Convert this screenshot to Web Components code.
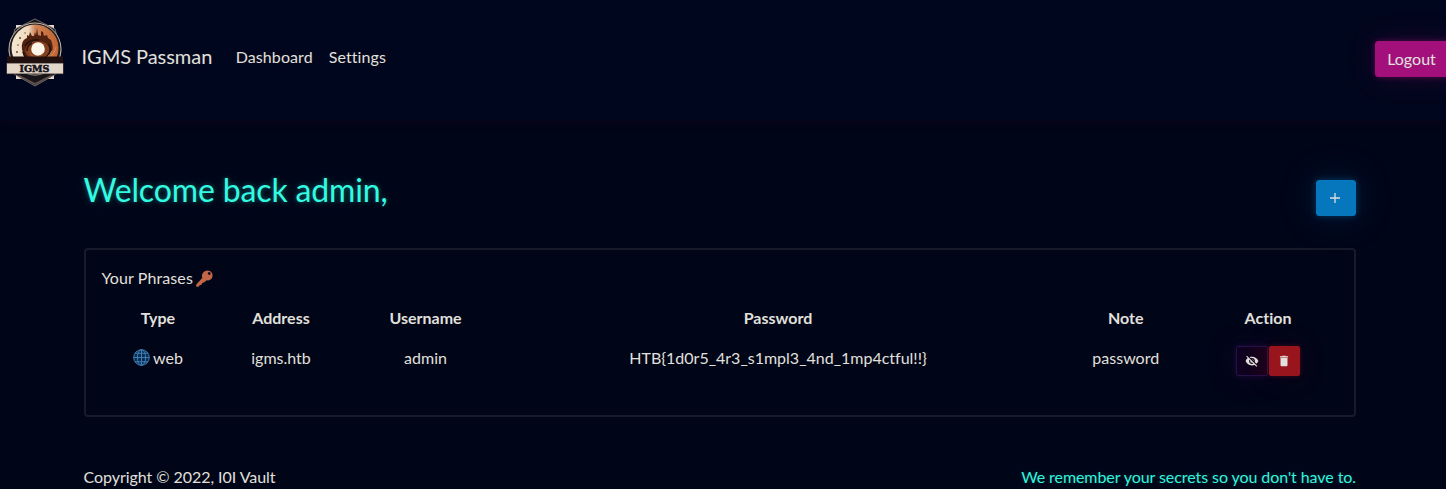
<!DOCTYPE html>
<html lang="en">
<head>
<meta charset="utf-8">
<title>IGMS Passman</title>
<style>
html,body{margin:0;height:489px;overflow:hidden;background:#000518}
body{font:16px/24px Lato,sans-serif;color:#e2e0dd;font-variant-ligatures:none}
</style>
</head>
<body>
<pass-app></pass-app>
<script>
const define = (name, html) => customElements.define(name, class extends HTMLElement {
  constructor() {
    super();
    this.attachShadow({ mode: 'open' }).innerHTML = html;
  }
});

define('igms-logo', `
<style>:host{display:block;width:60px;height:70px}svg{display:block}</style>
<svg width="60" height="70" viewBox="0 0 60 70">
<defs><linearGradient id="o" x1="0" x2="1"><stop offset="0" stop-color="#f6e8d4"/><stop offset=".36" stop-color="#eed9c0"/><stop offset=".5" stop-color="#cf8558"/><stop offset="1" stop-color="#c0622f"/></linearGradient></defs>
<path d="M11 7H49V61H11Z" fill="#e6d9cb"/>
<path d="M30 1L50 11L56 33L51 56L30 68L9 56L4 33L10 11Z" fill="#17151a" stroke="#8b8583" stroke-width=".8"/>
<path d="M12 56L30 65L48 56L45 59L30 67L15 59Z" fill="#66544e"/>
<circle cx="30" cy="31" r="26" fill="#211c20" stroke="#c9b8a5" stroke-width="1"/>
<circle cx="30" cy="30" r="23.5" fill="url(#o)"/>
<path d="M17 31Q16 24 20 21L22 20V17L24 18L25 14L27 18L29 18L30 14L31 17L32 10L33 17L36 18V13L38 14L39 18L42 17L43 20L46 22Q50 31 45 37Q40 43 30 43Q19 43 18 36Z" fill="#50210f"/>
<path d="M20 32Q22 24 31 23Q43 23 45 32Q42 41 32 42Q22 42 20 32Z" fill="#83401f"/>
<path d="M20 28Q24 21 34 22M18 34Q20 41 28 42M44 26Q48 35 39 41M22 33Q22 27 27 25" fill="none" stroke="#27120e" stroke-width="1.500"/>
<path d="M42 40Q50 37 51 29M35 42Q44 40 47 33" fill="none" stroke="#d58c5c"/>
<circle cx="33" cy="31" r="6.800" fill="#fff6e9"/>
<path d="M24 32Q26 38 32 38Q36 38 39 34Q36 41 30 40Q24 39 24 32Z" fill="#a05831"/>
<g fill="#6a4635"><circle cx="15" cy="20" r="1"/><circle cx="12" cy="34" r="1"/><circle cx="13" cy="27" r=".8"/><circle cx="20" cy="15" r=".7"/></g>
<path d="M2 38.500H58V45H2Z" fill="#21100e"/>
<path d="M1.500 45H58.500V56H1.500Z" fill="#e4d7ca" stroke="#221a1c" stroke-width=".8"/>
<text x="29.500" y="53.800" text-anchor="middle" textLength="30" lengthAdjust="spacingAndGlyphs" font-family="DejaVu Serif,serif" font-weight="bold" font-size="9.5" fill="#15121a" stroke="#15121a" stroke-width=".5">IGMS</text>
</svg>`);

const paths = {
  plus: '<path d="M12 3.500V20.500M3.500 12H20.500" stroke="currentColor" stroke-width="2.200" fill="none"/>',
  trash: '<path fill="currentColor" d="M6 19a2 2 0 0 0 2 2h8a2 2 0 0 0 2-2V7H6zM19 4h-3.500l-1-1h-5l-1 1H5v2h14z"/>',
  hidden: '<path fill="currentColor" d="M12 7c2.760 0 5 2.240 5 5 0 .65-.13 1.260-.36 1.830l2.920 2.920c1.510-1.260 2.700-2.890 3.430-4.750-1.730-4.390-6-7.500-11-7.500-1.400 0-2.740.25-3.980.7l2.160 2.160C10.740 7.130 11.350 7 12 7zM2 4.270l2.740 2.740C3.080 8.300 1.780 10.020 1 12c1.730 4.390 6 7.500 11 7.500 1.550 0 3.030-.3 4.380-.84L19.730 22 21 20.730 3.270 3 2 4.270zM7.530 9.800l1.550 1.550c-.05.21-.08.43-.08.65 0 1.660 1.340 3 3 3 .22 0 .44-.03.65-.08l1.550 1.550c-.67.33-1.410.53-2.200.53-2.760 0-5-2.240-5-5 0-.79.2-1.530.53-2.200zm4.310-.78l3.150 3.150.02-.16c0-1.660-1.340-3-3-3l-.17.01z"/>',
  key: '<path fill="#c36647" fill-rule="evenodd" d="M10 3.800C13.500-.8 19.500-.1 22.200 3.500C25 8 22.800 13.700 17.500 14.700L15 14.600L12.400 16.800L11.100 16.500L10.500 18.400L8.700 18.500L7.900 20.700L5.600 21.100L3.500 23.500L.5 23.600L.2 20.800L9 11C7.900 8.600 8 6.300 10 3.800ZM18 3A1.900 1.900 0 1 0 20.500 5.500A2 2 0 0 0 18 3Z"/>',
  globe: '<circle cx="12" cy="12" r="11" fill="#0b2c50"/><g fill="none" stroke="#3f7fb5" stroke-width="1.400"><circle cx="12" cy="12" r="11"/><ellipse cx="12" cy="12" rx="5.800" ry="11"/><path d="M12 1V23M1 12H23M3 6H21M3 18H21"/></g>'
};
customElements.define('named-icon', class extends HTMLElement {
  constructor() {
    super();
    this.attachShadow({ mode: 'open' }).innerHTML = '<style>:host{display:inline-block;line-height:0}svg{display:block;width:100%;height:100%}</style><svg viewBox="0 0 24 24"></svg>';
  }
  connectedCallback() { this.shadowRoot.querySelector('svg').innerHTML = paths[this.getAttribute('name')]; }
});

define('glow-button', `<style>
:host{display:block}
button{all:unset;box-sizing:border-box;display:flex;align-items:center;justify-content:center;width:100%;height:100%;border-radius:var(--radius,3px);background:var(--fill);border:1px solid var(--edge,var(--fill));box-shadow:var(--glow)}
</style><button><slot></slot></button>`);

define('pass-header', `<style>
:host{display:flex;box-sizing:border-box;height:120px;align-items:flex-start;background:#00061d;box-shadow:0 2px 8px #0a0416;text-shadow:0 0 5px #e2e0dd10}
igms-logo{margin:18px 0 0 5px}
.brand{font-size:20px;line-height:30px;letter-spacing:-.04px;margin:41px 23.500px 0 16.500px}
nav{display:flex;gap:16px;margin-top:45px;letter-spacing:.08px}
glow-button{width:84px;height:36px;margin:41px -13px 0 auto;--fill:#a3107c;--glow:0 0 6px #a3107c70,0 0 28px #a3107c30}
.out{padding-right:11px}
</style><igms-logo></igms-logo><div class="brand">IGMS Passman</div><nav><span>Dashboard</span><span>Settings</span></nav><glow-button><span class="out">Logout</span></glow-button>`);

define('phrase-table', `<style>
:host{display:block;box-sizing:border-box;height:169px;border:2px solid #171a28;border-radius:4px;padding:16px 16px}
.title,.web{display:flex;align-items:center;gap:3px}.title{height:24px;margin-left:-.5px}.title span{letter-spacing:.1px}.web{justify-content:center;height:24px}
.row{display:grid;grid-template-columns:112px 134px 155px 550px 145.500px 139px;text-align:center;margin-top:16px}
.head{font-weight:700}
.title named-icon,.web named-icon{width:17px;height:17px;margin-top:-1px}
.title named-icon{margin-top:0}
.actions{display:flex;gap:1px;justify-content:center}
glow-button{width:31.500px;height:30px;--radius:2px}
.hide{--fill:linear-gradient(90deg,#0c0220,#19031b);--edge:#28104a;--glow:0 0 6px #4c187058,0 0 30px #4c187035}
.delete{--fill:#98151e;--glow:0 0 5px #98151e60,0 0 30px #98151e20}
.actions named-icon{width:14px;height:14px}
</style>
<div class="title"><span>Your Phrases</span><named-icon name="key"></named-icon></div>
<div class="row head"><span>Type</span><span>Address</span><span>Username</span><span>Password</span><span>Note</span><span>Action</span></div>
<div class="row"><span class="web"><named-icon name="globe"></named-icon><span>web</span></span><span>igms.htb</span><span>admin</span><span>HTB{1d0r5_4r3_s1mpl3_4nd_1mp4ctful!!}</span><span>password</span>
<div class="actions"><glow-button class="hide"><named-icon name="hidden"></named-icon></glow-button><glow-button class="delete"><named-icon name="trash"></named-icon></glow-button></div></div>`);

define('pass-app', `<style>
:host{display:block}
main{padding:0 90px 0 84px}
.welcome{display:flex;justify-content:space-between;align-items:flex-start;padding-top:50px;height:78px}
h1{margin:0 0 0 -.5px;font-weight:400;font-size:32px;line-height:40px;letter-spacing:-.14px;color:#32fbe2;text-shadow:0 0 5px #32fbe260,0 0 22px #32fbe228}
.add{width:40.500px;height:36px;margin-top:10px;--fill:#0677bd;--glow:0 0 7px #0677bd70,0 0 38px #0677bd38}
.add named-icon{width:14px;height:14px;margin-right:1px}
footer{display:flex;justify-content:space-between;margin-top:48px;letter-spacing:-.075px}
footer span{margin-left:-.5px;letter-spacing:-.05px}
footer strong{font-weight:400;color:#32f5dd;text-shadow:0 0 5px #32fbe230}
</style><pass-header></pass-header><main><div class="welcome"><h1>Welcome back admin,</h1><glow-button class="add"><named-icon name="plus"></named-icon></glow-button></div><phrase-table></phrase-table><footer><span>Copyright © 2022, I0I Vault</span><strong>We remember your secrets so you don't have to.</strong></footer></main>`);
</script>
</body>
</html>
